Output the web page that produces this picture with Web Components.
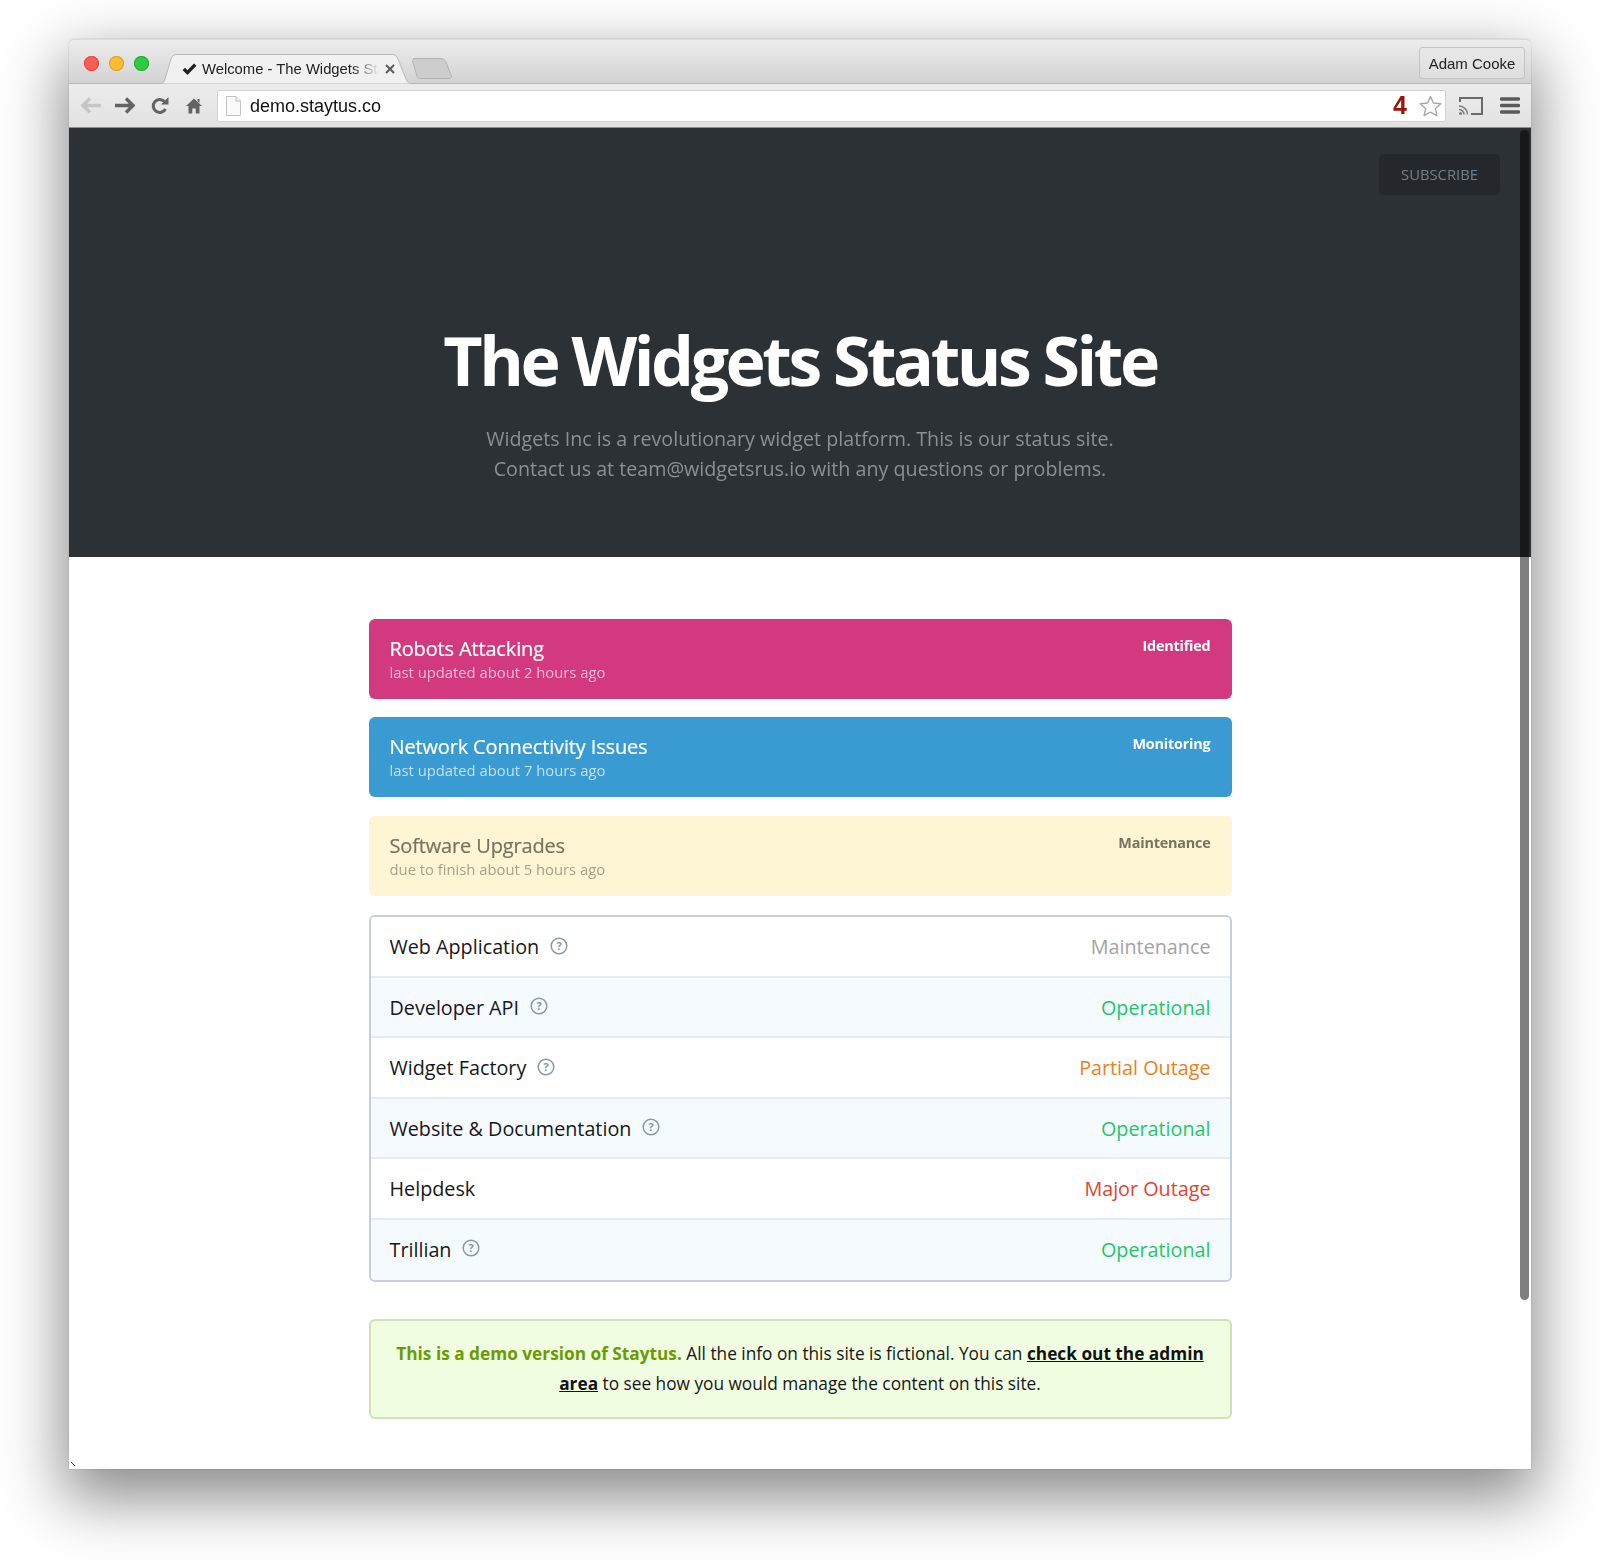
<!DOCTYPE html>
<html>
<head>
<meta charset="utf-8">
<title>The Widgets Status Site</title>
<style>
  html, body { margin: 0; padding: 0; background: #fff; }
  body { padding: 39px 69px 0 69px; height: 1527px; overflow: hidden; font-family: "Open Sans", sans-serif; }
</style>
</head>
<body>
<browser-window>
  <site-hero title="The Widgets Status Site">
    Widgets Inc is a revolutionary widget platform. This is our status site.<br>
    Contact us at team@widgetsrus.io with any questions or problems.
  </site-hero>
  <site-main>
    <status-alert kind="pink" state="Identified" heading="Robots Attacking">last updated about 2 hours ago</status-alert>
    <status-alert kind="blue" state="Monitoring" heading="Network Connectivity Issues">last updated about 7 hours ago</status-alert>
    <status-alert kind="yellow" state="Maintenance" heading="Software Upgrades">due to finish about 5 hours ago</status-alert>
    <service-list>
      <service-row name="Web Application" status="Maintenance" help></service-row>
      <service-row name="Developer API" status="Operational" help></service-row>
      <service-row name="Widget Factory" status="Partial Outage" help></service-row>
      <service-row name="Website &amp; Documentation" status="Operational" help></service-row>
      <service-row name="Helpdesk" status="Major Outage"></service-row>
      <service-row name="Trillian" status="Operational" help></service-row>
    </service-list>
    <demo-notice>
      <b>This is a demo version of Staytus.</b> All the info on this site is fictional. You can <a href="#">check out the admin area</a> to see how you would manage the content on this site.
    </demo-notice>
  </site-main>
</browser-window>

<script>
const browserWindow = document.createElement('template');
browserWindow.innerHTML = `
  <style>
    :host{
      display: flex;
      flex-direction: column;
      position: relative;
      height: 1430px;
      border-radius: 6px 6px 0 0;
      background: #fff;
      box-shadow: 0 24px 62px 6px rgba(0,0,0,.46), 0 0 1px rgba(0,0,0,.5);
      font-family: "Liberation Sans", sans-serif;
      filter: blur(.35px);
    }
    .tabstrip{
      display: flex;
      align-items: flex-end;
      height: 45px;
      flex: none;
      padding-left: 15px;
      box-sizing: border-box;
      border-radius: 6px 6px 0 0;
      background: linear-gradient(#ececec, #d3d3d3);
      border-bottom: 1px solid #b5b5b5;
      border-top: 1px solid #dcdcdc;
    }
    .lights{
      display: flex;
      gap: 10px;
      align-self: flex-start;
      margin-top: 16px;
      width: 76px;
      flex: none;
    }
    .lights i{ width: 15px; height: 15px; border-radius: 50%; }
    .tab{
      position: relative;
      display: flex;
      align-items: center;
      width: 254px;
      height: 30px;
      margin-bottom: -1px;
      flex: none;
      font-size: 14.8px;
      color: #222;
    }
    .tab > svg.shape{ position: absolute; left: 0; top: 0; }
    .tab span, .tab .tick, .tab .close{ position: relative; }
    .tab .tick{ margin-left: 22px; margin-right: 5px; flex: none; }
    .tab span{
      width: 177px;
      overflow: hidden;
      white-space: nowrap;
      -webkit-mask-image: linear-gradient(90deg, #000 150px, transparent 177px);
      mask-image: linear-gradient(90deg, #000 150px, transparent 177px);
    }
    .tab .close{ margin-left: 6px; flex: none; }
    .newtab{ margin: 0 0 4px -2px; flex: none; height: 21px; }
    .person{
      margin: 0 6px 4px auto;
      width: 106px;
      height: 32px;
      box-sizing: border-box;
      align-self: flex-end;
      display: flex;
      align-items: center;
      justify-content: center;
      border: 1px solid #c4c4c4;
      border-radius: 3px;
      font-size: 15px;
      color: #222;
      background: linear-gradient(#e9e9e9, #dedede);
    }
    .toolbar{
      display: flex;
      align-items: center;
      height: 44px;
      flex: none;
      box-sizing: border-box;
      padding-left: 12px;
      background: linear-gradient(#ececec, #e2e2e2);
      border-bottom: 1px solid #8d8d8d;
    }
    .toolbar > svg{ flex: none; }
    .omni{
      display: flex;
      align-items: center;
      margin-left: 15px;
      width: 1229px;
      height: 32px;
      box-sizing: border-box;
      flex: none;
      padding: 0 3px 0 8px;
      background: #fff;
      border: 1px solid #d2d2d2;
      border-radius: 2px;
      font-size: 18px;
      color: #111;
    }
    .omni .url{ margin-left: 9px; flex: 1; padding-top: 2px; }
    .omni .count{
      font-size: 25px;
      font-weight: bold;
      color: #a01208;
      margin-right: 12px;
    }
    .page{ flex: 1; min-height: 0; overflow: hidden; position: relative; }
    .scroll{
      position: absolute;
      right: 2px;
      top: 91px;
      width: 9px;
      height: 1170px;
      border-radius: 5px;
      background: rgba(0,0,0,.5);
    }
    .corner{ position: absolute; left: 2px; bottom: 2px; }
  </style>
  <div class="tabstrip">
    <div class="lights">
      <i style="background:#fc5b57;box-shadow:inset 0 0 0 1px #e5483f"></i>
      <i style="background:#fdbb2f;box-shadow:inset 0 0 0 1px #dfa023"></i>
      <i style="background:#33c748;box-shadow:inset 0 0 0 1px #27aa35"></i>
    </div>
    <div class="tab">
      <svg class="shape" width="254" height="30" viewBox="0 0 254 30">
        <path d="M0 30 C3 30 4 28 5 25 L11 5 C12 2 14 .5 17 .5 L232 .5 C235 .5 237 2 238 5 L246 25 C247 28 249 30 254 30 Z" fill="#f1f1f1" stroke="#b9b9b9"/>
      </svg>
      <svg class="tick" width="15" height="13" viewBox="0 0 16 14"><path d="M.5 7.500 L5.800 13 L15.500 3 L12.800 .5 L5.800 7.800 L3.200 5 Z" fill="#222"/></svg>
      <span>Welcome - The Widgets Status Site</span>
      <svg class="close" width="10" height="10" viewBox="0 0 10 10"><path d="M1 1 L9 9 M9 1 L1 9" stroke="#5b5b5b" stroke-width="2"/></svg>
    </div>
    <svg class="newtab" width="41" height="21" viewBox="0 0 41 21">
      <path d="M3 .5 L28 .5 C31 .5 33 2 34 4 L39 17 C40 19 39 20.500 37 20.500 L9 20.500 C7 20.500 5.500 19.500 5 18 L.8 4 C.3 2 1 .5 3 .5 Z" fill="#cdcdcd" stroke="#b3b3b3"/>
    </svg>
    <div class="person">Adam Cooke</div>
  </div>
  <div class="toolbar">
    <svg width="20" height="17" viewBox="0 0 20 17"><path d="M9 1.500 L2 8.500 L9 15.500 M3 8.500 L20 8.500" fill="none" stroke="#c6c6c6" stroke-width="3.400"/></svg>
    <svg style="margin-left:14px" width="20" height="17" viewBox="0 0 20 17"><path d="M11 1.500 L18 8.500 L11 15.500 M17 8.500 L0 8.500" fill="none" stroke="#636363" stroke-width="3.400"/></svg>
    <svg style="margin-left:16px" width="18" height="18" viewBox="0 0 18 18"><path d="M14.500 12 A6.500 6.500 0 1 1 13.500 4.500" fill="none" stroke="#636363" stroke-width="3"/><path d="M10 7.500 L17.500 7.500 L17.500 0 Z" fill="#636363"/></svg>
    <svg style="margin-left:17px" width="16" height="16" viewBox="0 0 16 16"><path d="M8 .5 L16 8 L13.500 8 L13.500 15.500 L9.700 15.500 L9.700 10.500 L6.300 10.500 L6.300 15.500 L2.500 15.500 L2.500 8 L0 8 Z M11.500 1 L13.500 1 L13.500 5 L11.500 3 Z" fill="#636363"/></svg>
    <div class="omni">
      <svg width="15" height="20" viewBox="0 0 15 20"><path d="M.5 .5 L10 .5 L14.500 5 L14.500 19.500 L.5 19.500 Z" fill="#fbfbfb" stroke="#c3c3c3"/><path d="M10 .5 L10 5 L14.500 5" fill="#eee" stroke="#c3c3c3"/></svg>
      <div class="url">demo.staytus.co</div>
      <div class="count">4</div>
      <svg width="23" height="22" viewBox="0 0 23 22"><path d="M11.500 1.500 L14.500 8 L21.800 8.800 L16.400 13.600 L17.900 20.700 L11.500 17.100 L5.100 20.700 L6.600 13.600 L1.200 8.800 L8.500 8 Z" fill="#fff" stroke="#a8a8a8" stroke-width="1.400" stroke-linejoin="round"/></svg>
    </div>
    <svg style="margin-left:13px" width="24" height="18" viewBox="0 0 24 18"><path d="M1 5 L1 1 L23 1 L23 17 L12 17" fill="none" stroke="#6a6a6a" stroke-width="2"/><path d="M0 9 A8.500 8.500 0 0 1 8.500 17.500 M0 12.500 A5 5 0 0 1 5 17.500" fill="none" stroke="#7a7a7a" stroke-width="1.500"/><circle cx="1.500" cy="16.500" r="1.500" fill="#7a7a7a"/></svg>
    <svg style="margin-left:17px" width="20" height="17" viewBox="0 0 20 17"><path d="M1.500 2 L18.500 2 M1.500 8.500 L18.500 8.500 M1.500 15 L18.500 15" stroke="#5a5a5a" stroke-width="3.400" stroke-linecap="round"/></svg>
  </div>
  <div class="page"><slot></slot></div>
  <div class="scroll"></div>
  <svg class="corner" width="5" height="5" viewBox="0 0 5 5"><path d="M0 0 L4 4" stroke="#333" stroke-width="1"/></svg>
`;

class BrowserWindow extends HTMLElement{
    constructor(){
        super();
        this.attachShadow({mode : 'open'});
        this.shadowRoot.appendChild(browserWindow.content.cloneNode(true));
    }
}
window.customElements.define('browser-window', BrowserWindow);

const siteHero = document.createElement('template');
siteHero.innerHTML = `
  <style>
    :host{
      display: block;
      height: 429px;
      box-sizing: border-box;
      padding-top: 26px;
      background: #2c3135;
      text-align: center;
      font-family: "Open Sans", sans-serif;
    }
    .bar{
      display: flex;
      justify-content: flex-end;
      padding-right: 31px;
    }
    .subscribe{
      width: 121px;
      height: 41px;
      line-height: 41px;
      border-radius: 5px;
      background: #24282c;
      color: #737f8a;
      font-size: 14.8px;
      font-weight: 400;
      text-transform: uppercase;
    }
    h1{
      margin: 125px 0 0;
      color: #fff;
      font-size: 68px;
      line-height: 80px;
      font-weight: 700;
      letter-spacing: -3.450px;
    }
    p{
      margin: 24px 0 0;
      color: #8b9094;
      font-size: 19.7px;
      line-height: 30px;
    }
  </style>
  <div class="bar"><div class="subscribe">Subscribe</div></div>
  <h1></h1>
  <p><slot></slot></p>
`;

class SiteHero extends HTMLElement{
    constructor(){
        super();
        this.attachShadow({mode : 'open'});
        this.shadowRoot.appendChild(siteHero.content.cloneNode(true));
        this.shadowRoot.querySelector('h1').textContent = this.getAttribute('title');
    }
}
window.customElements.define('site-hero', SiteHero);

const siteMain = document.createElement('template');
siteMain.innerHTML = `
  <style>
    :host{
      display: flex;
      flex-direction: column;
      gap: 18.4px;
      width: 863px;
      margin: 0 auto;
      padding-top: 62px;
    }
  </style>
  <slot></slot>
`;

class SiteMain extends HTMLElement{
    constructor(){
        super();
        this.attachShadow({mode : 'open'});
        this.shadowRoot.appendChild(siteMain.content.cloneNode(true));
    }
}
window.customElements.define('site-main', SiteMain);

const statusAlert = document.createElement('template');
statusAlert.innerHTML = `
  <style>
    :host{
      display: flex;
      justify-content: space-between;
      height: 80px;
      box-sizing: border-box;
      padding: 15px 21px 0;
      border-radius: 6px;
      font-family: "Open Sans", sans-serif;
      color: #fff;
    }
    :host([kind="pink"]){ background: #d2397e; --sub: #f3bcd5; }
    :host([kind="blue"]){ background: #399bd2; --sub: #bfe0f2; }
    :host([kind="yellow"]){ background: #fef5d5; color: #78735c; --sub: #a8a288; }
    h2{
      margin: 0;
      font-size: 20px;
      line-height: 30px;
      font-weight: 500;
      letter-spacing: -.15px;
      -webkit-text-stroke: .2px currentColor;
    }
    .sub{
      margin-top: -1px;
      font-size: 14.8px;
      line-height: 18px;
      color: var(--sub);
    }
    .state{
      font-size: 14.4px;
      line-height: 24px;
      font-weight: 700;
      letter-spacing: -.2px;
    }
  </style>
  <div>
    <h2></h2>
    <div class="sub"><slot></slot></div>
  </div>
  <div class="state"></div>
`;

class StatusAlert extends HTMLElement{
    constructor(){
        super();
        this.attachShadow({mode : 'open'});
        this.shadowRoot.appendChild(statusAlert.content.cloneNode(true));
        this.shadowRoot.querySelector('h2').textContent = this.getAttribute('heading');
        this.shadowRoot.querySelector('.state').textContent = this.getAttribute('state');
    }
}
window.customElements.define('status-alert', StatusAlert);

const serviceList = document.createElement('template');
serviceList.innerHTML = `
  <style>
    :host{
      display: block;
      margin-top: 1px;
      margin-bottom: 18.4px;
      border: 2px solid #c6d0db;
      border-radius: 6px;
      overflow: hidden;
    }
    ::slotted(service-row:nth-child(even)){ background: #f5faff; }
    ::slotted(service-row:last-child){ border-bottom-color: transparent; }
  </style>
  <slot></slot>
`;

class ServiceList extends HTMLElement{
    constructor(){
        super();
        this.attachShadow({mode : 'open'});
        this.shadowRoot.appendChild(serviceList.content.cloneNode(true));
    }
}
window.customElements.define('service-list', ServiceList);

const statusColours = {
    'Maintenance' : '#a3a3a3',
    'Operational' : '#1dc866',
    'Partial Outage' : '#ee7d1c',
    'Major Outage' : '#e8412f'
};

const serviceRow = document.createElement('template');
serviceRow.innerHTML = `
  <style>
    :host{
      display: flex;
      align-items: center;
      height: 60.5px;
      box-sizing: border-box;
      padding: 1px 19px 0 19px;
      border-bottom: 2px solid #e5ecf3;
      background: #fff;
      font-family: "Open Sans", sans-serif;
      font-size: 19.75px;
      color: #15181b;
    }
    svg{ margin-left: 11px; margin-top: -2px; display: none; }
    :host([help]) svg{ display: block; }
    .status{ margin-left: auto; }
  </style>
  <span class="name"></span>
  <svg width="18" height="18" viewBox="0 0 18 18">
    <circle cx="9" cy="9" r="7.800" fill="none" stroke="#8a97a4" stroke-width="1.500"/>
    <text x="9" y="12.800" text-anchor="middle" font-family="Open Sans, sans-serif" font-size="11" font-weight="700" fill="#8a97a4">?</text>
  </svg>
  <span class="status"></span>
`;

class ServiceRow extends HTMLElement{
    constructor(){
        super();
        this.attachShadow({mode : 'open'});
        this.shadowRoot.appendChild(serviceRow.content.cloneNode(true));
        const status = this.getAttribute('status');
        const label = this.shadowRoot.querySelector('.status');
        this.shadowRoot.querySelector('.name').textContent = this.getAttribute('name');
        label.textContent = status;
        label.style.color = statusColours[status];
    }
}
window.customElements.define('service-row', ServiceRow);

const demoNotice = document.createElement('template');
demoNotice.innerHTML = `
  <style>
    :host{
      display: block;
      height: 100px;
      box-sizing: border-box;
      padding: 18px 20px 0;
      border: 2px solid #d0e0b9;
      border-radius: 6px;
      background: #f1fde0;
      text-align: center;
      font-family: "Open Sans", sans-serif;
      font-size: 17.25px;
      line-height: 30px;
      color: #15181b;
    }
    ::slotted(b){ color: #6a9c00; font-weight: 700; }
    ::slotted(a){ color: #111; font-weight: 700; }
  </style>
  <slot></slot>
`;

class DemoNotice extends HTMLElement{
    constructor(){
        super();
        this.attachShadow({mode : 'open'});
        this.shadowRoot.appendChild(demoNotice.content.cloneNode(true));
    }
}
window.customElements.define('demo-notice', DemoNotice);
</script>
</body>
</html>
